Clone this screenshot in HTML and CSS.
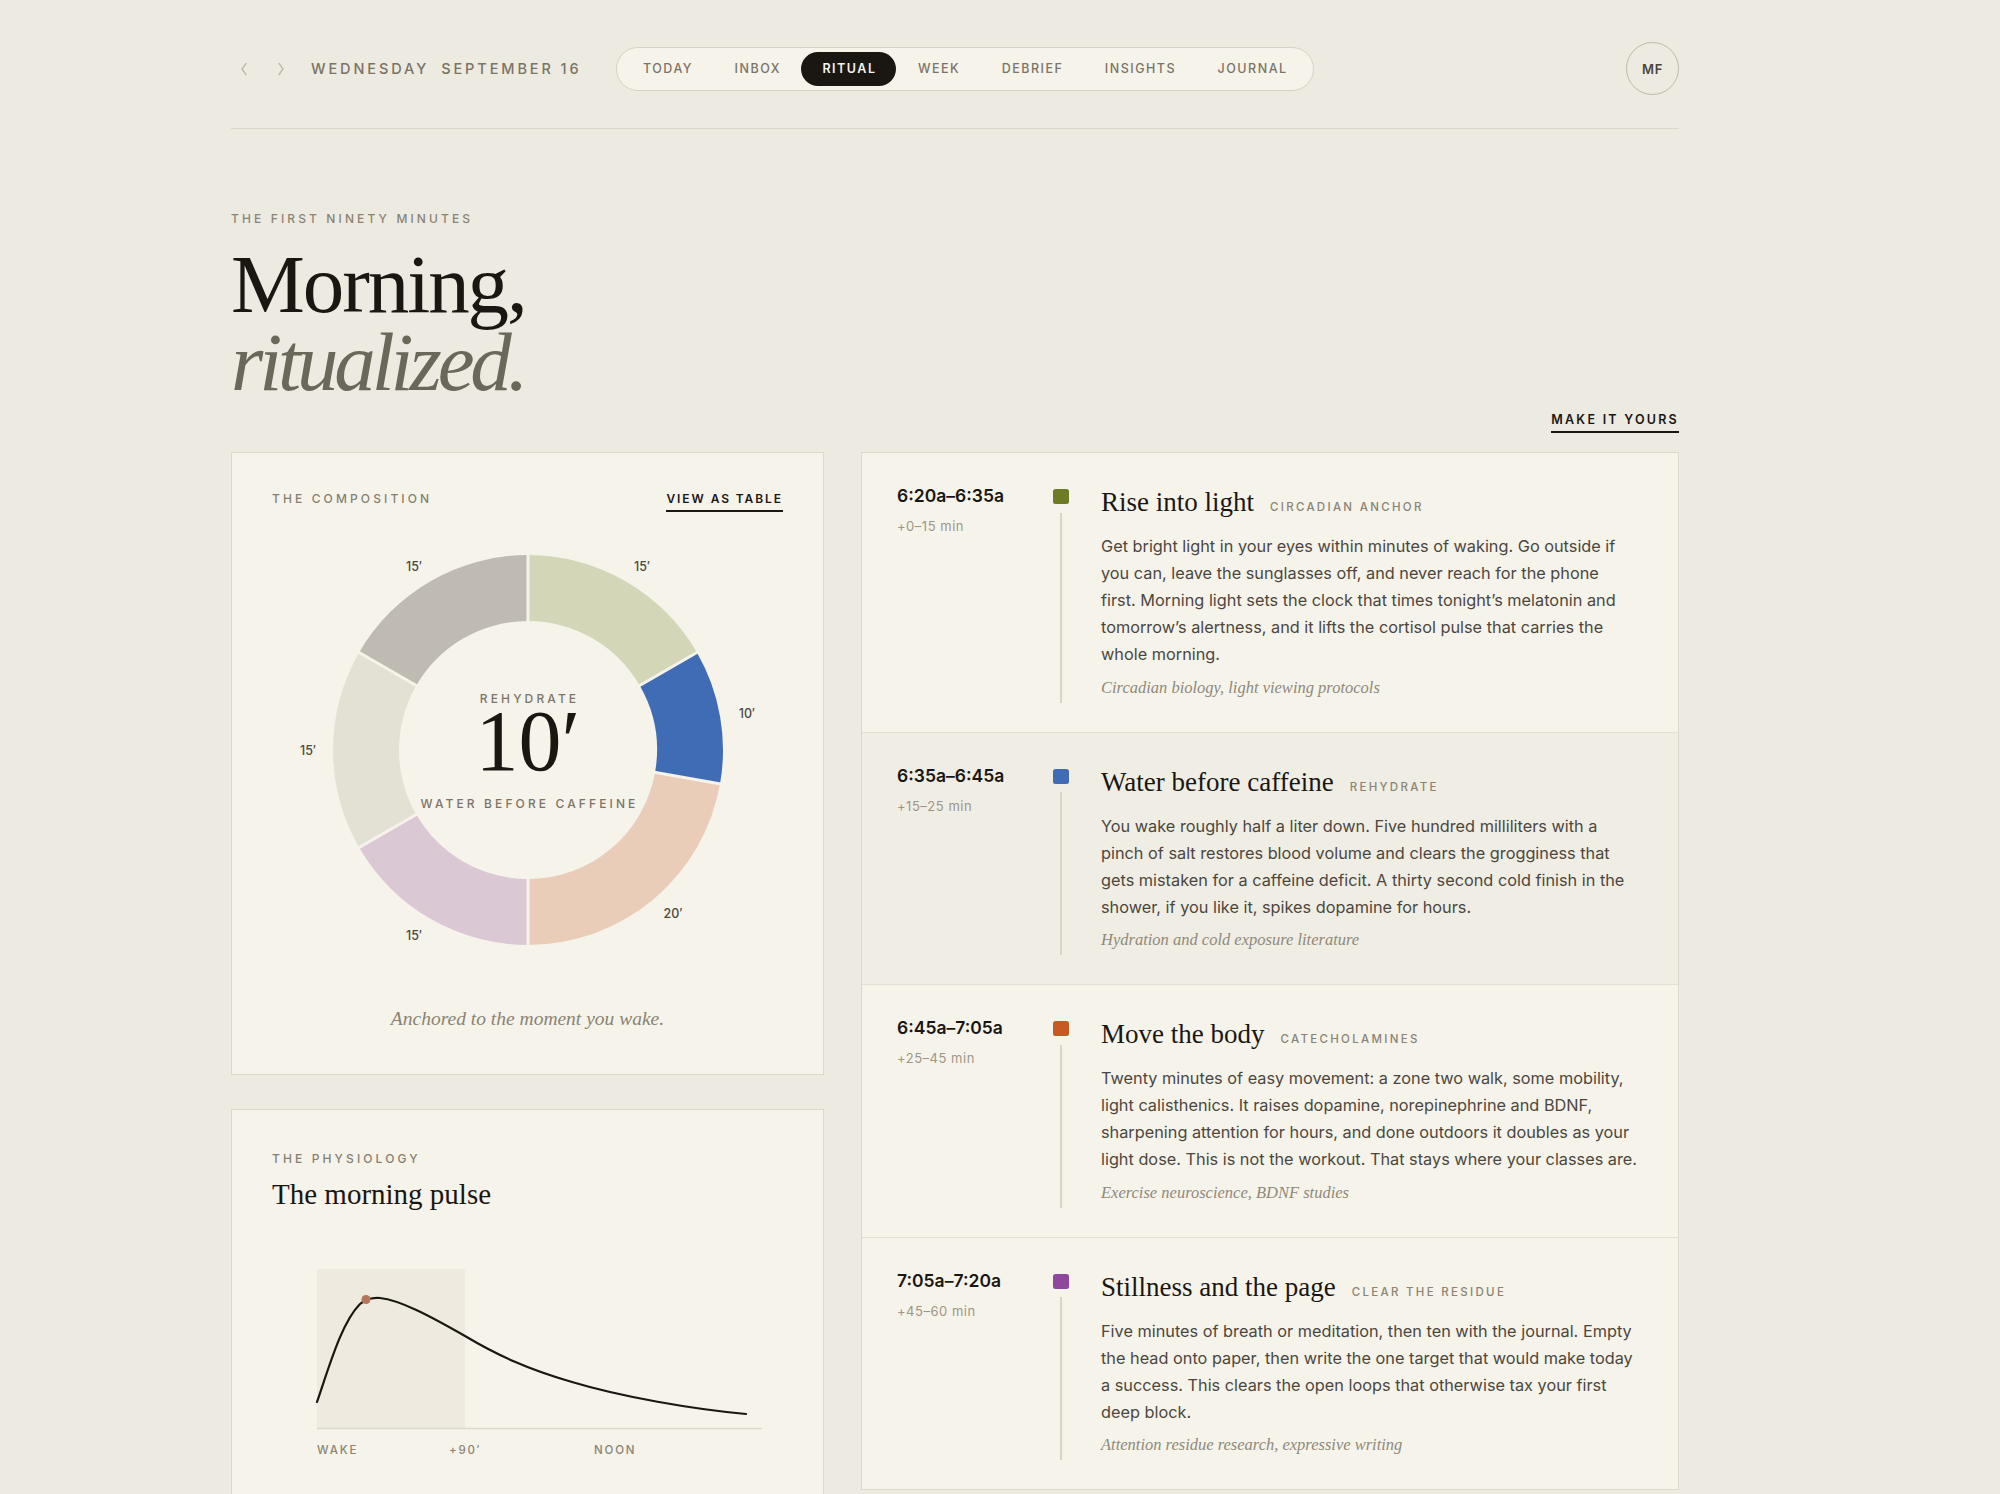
FILE: index.html
```html
<!DOCTYPE html>
<html lang="en">
<head>
<meta charset="utf-8">
<title>Ritual — Morning, ritualized</title>
<link rel="stylesheet" href="styles.css">
</head>
<body>
<div class="page">
  <header class="topbar">
    <div class="datebox">
      <button class="chev" aria-label="Previous day"><svg width="10" height="14" viewBox="0 0 10 14"><path d="M7 1.5 L3 7 L7 12.5"/></svg></button>
      <button class="chev" aria-label="Next day"><svg width="10" height="14" viewBox="0 0 10 14"><path d="M3 1.5 L7 7 L3 12.5"/></svg></button>
      <div class="date"><span>Wednesday</span><span>September 16</span></div>
    </div>
    <nav class="tabs">
      <a class="tab" href="#">Today</a>
      <a class="tab" href="#">Inbox</a>
      <a class="tab active" href="#">Ritual</a>
      <a class="tab" href="#">Week</a>
      <a class="tab" href="#">Debrief</a>
      <a class="tab" href="#">Insights</a>
      <a class="tab" href="#">Journal</a>
    </nav>
    <div class="avatar">MF</div>
  </header>

  <section class="hero">
    <p class="eyebrow">The first ninety minutes</p>
    <h1 class="title">Morning,<br><em>ritualized.</em></h1>
  </section>

  <div class="toolbar"><a class="ulink" href="#">Make it yours</a></div>

  <main class="grid">
    <div class="leftcol">
      <section class="card comp">
        <div class="card-head">
          <span class="label">The composition</span>
          <a class="ulink small" href="#">View as table</a>
        </div>
        <svg class="donut" viewBox="-240 -238 480 478" width="480" height="478" role="img" aria-label="Ritual composition donut">
          <path fill="#d3d6b7" d="M0,-195 A195,195 0 0 1 168.87,-97.5 L111.71,-64.5 A129,129 0 0 0 0,-129 Z"/>
          <path fill="#3f6cb4" d="M168.87,-97.5 A195,195 0 0 1 192.04,33.86 L127.04,22.40 A129,129 0 0 0 111.71,-64.5 Z"/>
          <path fill="#eacdb8" d="M192.04,33.86 A195,195 0 0 1 0,195 L0,129 A129,129 0 0 0 127.04,22.40 Z"/>
          <path fill="#dbc8d5" d="M0,195 A195,195 0 0 1 -168.87,97.5 L-111.71,64.5 A129,129 0 0 0 0,129 Z"/>
          <path fill="#e3e0d4" d="M-168.87,97.5 A195,195 0 0 1 -168.87,-97.5 L-111.71,-64.5 A129,129 0 0 0 -111.71,64.5 Z"/>
          <path fill="#bfbbb2" d="M-168.87,-97.5 A195,195 0 0 1 0,-195 L0,-129 A129,129 0 0 0 -111.71,-64.5 Z"/>
          <g class="seps">
            <line x1="0" y1="-124" x2="0" y2="-200"/>
            <line x1="107.39" y1="-62" x2="173.2" y2="-100"/>
            <line x1="122.12" y1="21.53" x2="196.96" y2="34.73"/>
            <line x1="0" y1="124" x2="0" y2="200"/>
            <line x1="-107.39" y1="62" x2="-173.2" y2="100"/>
            <line x1="-107.39" y1="-62" x2="-173.2" y2="-100"/>
          </g>
          <g class="dl">
            <text x="114" y="-184">15′</text>
            <text x="219" y="-37">10′</text>
            <text x="145" y="163">20′</text>
            <text x="-114" y="185">15′</text>
            <text x="-220" y="0">15′</text>
            <text x="-114" y="-184">15′</text>
          </g>
          <text class="dc-label" x="1.5" y="-47.5">REHYDRATE</text>
          <text class="dc-num" x="0" y="20">10′</text>
          <text class="dc-label" x="1.5" y="57.5">WATER BEFORE CAFFEINE</text>
        </svg>
        <p class="caption">Anchored to the moment you wake.</p>
      </section>

      <section class="card phys">
        <span class="label">The physiology</span>
        <h2 class="card-title">The morning pulse</h2>
        <svg class="chart" viewBox="0 0 510 204" width="510" height="204" role="img" aria-label="Cortisol pulse after waking">
          <rect x="45" y="13" width="148" height="159" fill="#eeeadf"/>
          <line class="axis" x1="45" y1="172.5" x2="490" y2="172.5"/>
          <path class="curve" d="M45,146 C58,108 70,66 88,48 C95,42 101,41.5 108,42 C128,44 158,60 193,80 C225,99 255,113 300,126 C350,141 420,153 474,158"/>
          <circle cx="94" cy="43.5" r="4.5" fill="#b4775a"/>
          <text class="tick" x="45" y="198">WAKE</text>
          <text class="tick" x="177" y="198">+90′</text>
          <text class="tick" x="322" y="198">NOON</text>
        </svg>
      </section>
    </div>

    <section class="card ritual">
      <article class="step">
        <div class="when">
          <div class="time">6:20a–6:35a</div>
          <div class="offset">+0–15 min</div>
        </div>
        <div class="marker"><span class="sq olive"></span><span class="rail"></span></div>
        <div class="content">
          <div class="head"><h3>Rise into light</h3><span class="tag">Circadian anchor</span></div>
          <p class="body">Get bright light in your eyes within minutes of waking. Go outside if you can, leave the sunglasses off, and never reach for the phone first. Morning light sets the clock that times tonight’s melatonin and tomorrow’s alertness, and it lifts the cortisol pulse that carries the whole morning.</p>
          <p class="source">Circadian biology, light viewing protocols</p>
        </div>
      </article>

      <article class="step current">
        <div class="when">
          <div class="time">6:35a–6:45a</div>
          <div class="offset">+15–25 min</div>
        </div>
        <div class="marker"><span class="sq blue"></span><span class="rail"></span></div>
        <div class="content">
          <div class="head"><h3>Water before caffeine</h3><span class="tag">Rehydrate</span></div>
          <p class="body">You wake roughly half a liter down. Five hundred milliliters with a pinch of salt restores blood volume and clears the grogginess that gets mistaken for a caffeine deficit. A thirty second cold finish in the shower, if you like it, spikes dopamine for hours.</p>
          <p class="source">Hydration and cold exposure literature</p>
        </div>
      </article>

      <article class="step">
        <div class="when">
          <div class="time">6:45a–7:05a</div>
          <div class="offset">+25–45 min</div>
        </div>
        <div class="marker"><span class="sq orange"></span><span class="rail"></span></div>
        <div class="content">
          <div class="head"><h3>Move the body</h3><span class="tag">Catecholamines</span></div>
          <p class="body">Twenty minutes of easy movement: a zone two walk, some mobility, light calisthenics. It raises dopamine, norepinephrine and BDNF, sharpening attention for hours, and done outdoors it doubles as your light dose. This is not the workout. That stays where your classes are.</p>
          <p class="source">Exercise neuroscience, BDNF studies</p>
        </div>
      </article>

      <article class="step">
        <div class="when">
          <div class="time">7:05a–7:20a</div>
          <div class="offset">+45–60 min</div>
        </div>
        <div class="marker"><span class="sq purple"></span><span class="rail"></span></div>
        <div class="content">
          <div class="head"><h3>Stillness and the page</h3><span class="tag">Clear the residue</span></div>
          <p class="body">Five minutes of breath or meditation, then ten with the journal. Empty the head onto paper, then write the one target that would make today a success. This clears the open loops that otherwise tax your first deep block.</p>
          <p class="source">Attention residue research, expressive writing</p>
        </div>
      </article>
    </section>
  </main>
</div>
</body>
</html>
```

FILE: styles.css
```css
html, body {
  margin: 0;
  padding: 0;
  background: #edeae1;
}

body {
  font-family: "Inter", "Liberation Sans", sans-serif;
  color: #1a1713;
}

.page {
  width: 1448px;
  margin-left: 231px;
  padding-bottom: 60px;
}

/* ---------- top bar ---------- */
.topbar {
  display: flex;
  align-items: center;
  padding: 42px 0 33px;
  border-bottom: 1.5px solid #d9d5c8;
}

.datebox {
  display: flex;
  align-items: center;
}

.chev {
  width: 26px;
  height: 26px;
  padding: 0;
  border: 0;
  background: transparent;
  display: flex;
  align-items: center;
  justify-content: center;
}

.chev + .chev {
  margin-left: 11px;
}

.chev path {
  fill: none;
  stroke: #bcb7aa;
  stroke-width: 1.3;
  stroke-linecap: round;
  stroke-linejoin: round;
}

.date {
  margin-left: 17px;
  display: flex;
  gap: 12px;
  font-size: 14.5px;
  font-weight: 500;
  letter-spacing: 0.2em;
  text-transform: uppercase;
  color: #7a7466;
}

.tabs {
  margin-left: 34px;
  display: flex;
  padding: 4px 5px;
  border: 1.5px solid #d6d2c4;
  border-radius: 999px;
  background: #f6f3eb;
}

.tab {
  display: block;
  padding: 0 20px 0 21.5px;
  line-height: 34px;
  font-size: 12.5px;
  font-weight: 500;
  letter-spacing: 0.12em;
  text-transform: uppercase;
  text-decoration: none;
  color: #7a7466;
  border-radius: 999px;
}

.tab.active {
  background: #1a1713;
  color: #f6f3eb;
  font-weight: 600;
}

.avatar {
  margin-left: auto;
  width: 51px;
  height: 51px;
  border: 1.5px solid #bdb8aa;
  border-radius: 50%;
  display: flex;
  align-items: center;
  justify-content: center;
  font-size: 13px;
  font-weight: 600;
  letter-spacing: 0.06em;
  color: #4a463d;
}

/* ---------- hero ---------- */
.hero {
  margin-top: 81px;
}

.eyebrow {
  margin: 0;
  font-size: 12px;
  line-height: 18px;
  font-weight: 500;
  letter-spacing: 0.26em;
  text-transform: uppercase;
  color: #8a8474;
}

.title {
  margin: 17px 0 0;
  font-family: "Liberation Serif", "DejaVu Serif", serif;
  font-weight: 400;
  font-size: 83px;
  line-height: 78px;
  letter-spacing: -0.025em;
  color: #1a1713;
}

.title em {
  font-style: italic;
  letter-spacing: -0.05em;
  color: #6c675b;
}

.toolbar {
  display: flex;
  justify-content: flex-end;
  margin-top: 10px;
}

.ulink {
  display: inline-block;
  font-size: 12.5px;
  line-height: 18px;
  font-weight: 600;
  letter-spacing: 0.18em;
  text-transform: uppercase;
  text-decoration: none;
  color: #1a1713;
  padding-bottom: 2px;
  border-bottom: 2px solid #1a1713;
}

.ulink.small {
  font-size: 12px;
  letter-spacing: 0.16em;
}

/* ---------- grid ---------- */
.grid {
  display: grid;
  grid-template-columns: 593px 1fr;
  column-gap: 37px;
  align-items: start;
  margin-top: 19px;
}

.leftcol {
  display: flex;
  flex-direction: column;
  gap: 34px;
}

.card {
  background: #f6f3eb;
  border: 1.5px solid #dcd8cb;
}

.label {
  display: block;
  font-size: 12px;
  line-height: 18px;
  font-weight: 500;
  letter-spacing: 0.26em;
  text-transform: uppercase;
  color: #858071;
}

/* composition card */
.comp {
  padding: 36.5px 40px 42.5px;
}

.card-head {
  display: flex;
  justify-content: space-between;
  align-items: flex-start;
}

.donut {
  display: block;
  margin: 0 auto;
}

.seps line {
  stroke: #f6f3eb;
  stroke-width: 3;
}

.dl text {
  font-family: "Inter", "Liberation Sans", sans-serif;
  font-size: 12.5px;
  font-weight: 500;
  fill: #4d493f;
  text-anchor: middle;
  dominant-baseline: central;
}

.dc-label {
  font-family: "Inter", "Liberation Sans", sans-serif;
  font-size: 12px;
  font-weight: 500;
  letter-spacing: 0.26em;
  fill: #7b7567;
  text-anchor: middle;
}

.dc-num {
  font-family: "Liberation Serif", "DejaVu Serif", serif;
  font-size: 86px;
  fill: #1a1713;
  text-anchor: middle;
}

.caption {
  margin: 16px 0 0;
  text-align: center;
  font-family: "Liberation Serif", "DejaVu Serif", serif;
  font-style: italic;
  font-size: 19.5px;
  line-height: 26px;
  color: #8a8474;
}

/* physiology card */
.phys {
  padding: 40px 40px 60px;
}

.card-title {
  margin: 8px 0 0;
  font-family: "Liberation Serif", "DejaVu Serif", serif;
  font-weight: 400;
  font-size: 29px;
  line-height: 36px;
  color: #1a1713;
}

.chart {
  display: block;
  margin-top: 44px;
}

.chart .axis {
  stroke: #dcd8cb;
  stroke-width: 1.5;
}

.chart .curve {
  fill: none;
  stroke: #1a1713;
  stroke-width: 2.2;
  stroke-linecap: round;
}

.chart .tick {
  font-family: "Inter", "Liberation Sans", sans-serif;
  font-size: 11.5px;
  font-weight: 500;
  letter-spacing: 0.16em;
  fill: #8a8474;
}

/* ritual list */
.step {
  display: grid;
  grid-template-columns: 156px 16px 1fr;
  padding: 32px 40px 32px 35px;
}

.step + .step {
  border-top: 1px solid #e3dfd3;
}

.step.current {
  background: #f0ede4;
}

.time {
  margin-top: 1px;
  font-size: 17.5px;
  line-height: 20px;
  font-weight: 600;
  color: #1a1713;
}

.offset {
  margin-top: 11px;
  font-size: 13px;
  line-height: 18px;
  letter-spacing: 0.04em;
  color: #9c9687;
}

.marker {
  display: flex;
  flex-direction: column;
  align-items: center;
}

.sq {
  width: 16px;
  height: 15px;
  border-radius: 2.5px;
  margin-top: 4px;
}

.sq.olive { background: #6d7a26; }
.sq.blue { background: #3f6cb4; }
.sq.orange { background: #c75a22; }
.sq.purple { background: #8e489e; }

.rail {
  flex: 1;
  width: 1.5px;
  margin-top: 8.5px;
  margin-bottom: -3px;
  background: #d8d4c7;
}

.content {
  padding-left: 32px;
}

.head {
  display: flex;
  align-items: baseline;
  gap: 16px;
}

.head h3 {
  margin: 0;
  font-family: "Liberation Serif", "DejaVu Serif", serif;
  font-weight: 400;
  font-size: 27px;
  line-height: 34px;
  color: #1a1713;
}

.tag {
  font-size: 11.5px;
  font-weight: 500;
  letter-spacing: 0.2em;
  text-transform: uppercase;
  color: #8a8474;
}

.body {
  margin: 14px 0 0;
  font-size: 16.3px;
  line-height: 27px;
  color: #4b473e;
}

.source {
  margin: 7.5px 0 0;
  font-family: "Liberation Serif", "DejaVu Serif", serif;
  font-style: italic;
  font-size: 16.5px;
  line-height: 24px;
  color: #8f897a;
}
```
